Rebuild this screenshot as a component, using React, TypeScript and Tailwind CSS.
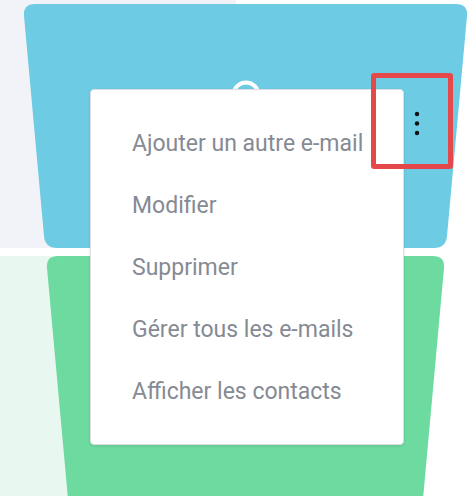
import React from "react";

const items = [
  "Ajouter un autre e-mail",
  "Modifier",
  "Supprimer",
  "Gérer tous les e-mails",
  "Afficher les contacts",
];

export default function App() {
  return (
    <div
      className="relative w-[472px] h-[496px] overflow-hidden bg-white"
      style={{ fontFamily: "Roboto, 'Noto Sans', sans-serif" }}
    >
      <div className="flex flex-col h-full">
        <div className="flex h-[248px]">
          <div className="w-[236px] bg-[#f2f3f8]" />
          <div className="flex-1 bg-white" />
        </div>
        <div className="h-[8px] bg-white" />
        <div className="flex flex-1">
          <div className="w-[236px] bg-[#e8f7ef]" />
          <div className="flex-1 bg-white" />
        </div>
      </div>

      <svg
        className="absolute inset-0"
        width="472"
        height="496"
        viewBox="0 0 472 496"
      >
        <path
          d="M 35 4 L 456 4 Q 468 4 467 16 L 447 236 Q 446 248 434 248 L 57 248 Q 45 248 44 236 L 24 16 Q 23 4 35 4 Z"
          fill="#6dcce3"
        />
        <path
          d="M 58 256 L 433 256 Q 445 256 444 268 L 422 510 L 69 510 L 47 268 Q 46 256 58 256 Z"
          fill="#6ddb9f"
        />
        <circle cx="246" cy="95" r="12.5" fill="none" stroke="#ffffff" strokeWidth="4" />
        <circle cx="417" cy="114" r="2.2" fill="#111" />
        <circle cx="417" cy="123.5" r="2.2" fill="#111" />
        <circle cx="417" cy="133" r="2.2" fill="#111" />
      </svg>

      <div className="absolute left-[90px] top-[89px] w-[314px] rounded-[4px] bg-white border border-[#dedfe3] shadow-[0_1px_3px_rgba(0,0,0,0.12)] pt-[22px] pb-[22px]">
        {items.map((t) => (
          <div
            key={t}
            className="h-[62px] flex items-center pl-[41px] text-[23px] text-[#858a93] leading-none"
          >
            {t}
          </div>
        ))}
      </div>

      <div className="absolute left-[371px] top-[73px] w-[82px] h-[96px] border-[5px] border-[#e5484b] rounded-[3px]" />
    </div>
  );
}
